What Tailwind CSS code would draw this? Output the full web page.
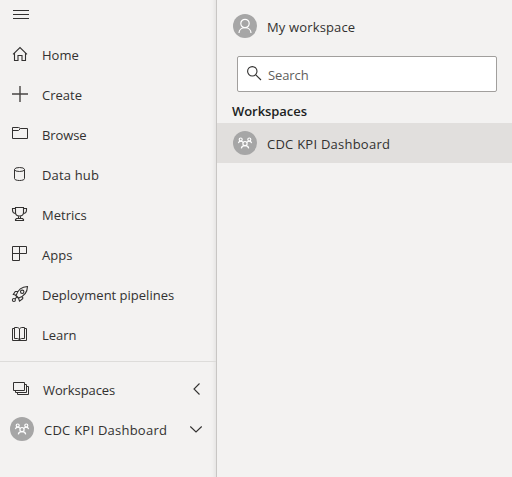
<!DOCTYPE html>
<html lang="en">
<head>
<meta charset="utf-8">
<title>Workspaces</title>
<script src="https://cdn.jsdelivr.net/npm/@tailwindcss/browser@4"></script>
</head>
<body class="bg-[#f3f2f1] text-[#323130] font-['Open_Sans','Noto_Sans',sans-serif] text-[13px] leading-5 overflow-hidden">
<svg class="hidden">
  <symbol id="people" viewBox="0 0 24 24">
    <circle cx="12" cy="12" r="12" fill="#a6a6a6"/>
    <g fill="none" stroke="#fff" stroke-width="1.2">
      <circle cx="7.700" cy="8.500" r="1.500"/><circle cx="16.300" cy="8.500" r="1.500"/><circle cx="12" cy="12.600" r="2.100"/>
      <path d="M5.400 12.200c.2-1.400 1-2.100 2.300-2.100 1.200 0 2 .6 2.600 1.400M18.600 12.200c-.2-1.400-1-2.100-2.300-2.100-1.200 0-2 .6-2.600 1.400M8.300 17.400c.3-1.900 1.700-2.800 3.700-2.800s3.400.9 3.700 2.800"/>
    </g>
  </symbol>
</svg>
<div class="flex h-[477px] w-[512px]">
  <nav class="w-[217px] shrink-0 border-r border-[#c8c6c4] flex flex-col shadow-[inset_-5px_0_4px_-4px_rgba(0,0,0,0.08)]">
    <div class="h-[35px] pl-[10px] pt-1">
      <svg class="size-5" viewBox="0 0 20 20" fill="none" stroke="#323130"><path d="M3 6.500h16M3 10.500h16M3 14.500h16"/></svg>
    </div>
    <ul class="h-80">
      <li class="h-10 flex items-center pl-[10px] gap-3"><svg class="size-5 -mt-0.5" viewBox="0 0 20 20" fill="none" stroke="#323130" stroke-width="1.1"><path d="M3 10.300L10 3.600l7 6.700M4.500 9v7.500h3.500v-5h4v5h3.500V9"/></svg><span>Home</span></li>
      <li class="h-10 flex items-center pl-[10px] gap-3"><svg class="size-5 -mt-0.5" viewBox="0 0 20 20" fill="none" stroke="#484644" stroke-width="1.400"><path d="M2 10h16M10 2v16"/></svg><span>Create</span></li>
      <li class="h-10 flex items-center pl-[10px] gap-3"><svg class="size-5 -mt-0.5" viewBox="0 0 20 20" fill="none" stroke="#323130"><path d="M2.500 14.500v-11h6l2 1h7v10h-15zM2.500 6.500h6l2-2"/></svg><span class="tracking-[-0.1px]">Browse</span></li>
      <li class="h-10 flex items-center pl-[10px] gap-3"><svg class="size-5 -mt-0.5" viewBox="0 0 20 20" fill="none" stroke="#323130"><ellipse cx="9.500" cy="5.500" rx="5" ry="2"/><path d="M4.500 5.500v9c0 1.200 2 2 5 2s5-.8 5-2v-9"/></svg><span class="tracking-[0.15px]">Data hub</span></li>
      <li class="h-10 flex items-center pl-[10px] gap-3"><svg class="size-5 -mt-0.5" viewBox="0 0 20 20" fill="none" stroke="#323130" stroke-width="1.100"><path d="M5.500 3.500h8v5c0 2-1.500 3.500-4 3.500s-4-1.500-4-3.500zM5.500 4.500h-3v1.500c0 2 1.300 3.500 3.400 3.500M13.500 4.500h3v1.500c0 2-1.300 3.500-3.400 3.500M8.500 12v2.500M10.500 12v2.500M5.500 16.500v-1l1-1h6l1 1v1z"/></svg><span>Metrics</span></li>
      <li class="h-10 flex items-center pl-[10px] gap-3"><svg class="size-5 -mt-0.5" viewBox="0 0 20 20" fill="none" stroke="#323130"><path d="M2.500 2.500h14v7h-7v7h-7zM2.500 9.500h7v-7"/></svg><span>Apps</span></li>
      <li class="h-10 flex items-center pl-[10px] gap-3"><svg class="size-5 -mt-0.5" viewBox="0 0 20 20" fill="none" stroke="#323130" stroke-width="1.100"><path d="M6 11.500C7.500 7 11 2.800 17.500 2.500 17.300 8.500 13.500 12.500 8.500 14zM8.300 7.300L5.300 7.500 3.300 10.500l3 .8M12.700 11.700v3l-3.200 2.500-1-3.200M5 10.800l4.200 4.200"/><circle cx="12.200" cy="7.800" r="1.700"/><circle cx="3.900" cy="16" r="1.500"/><path d="M5 14.900l2.200-2.200"/></svg><span>Deployment pipelines</span></li>
      <li class="h-10 flex items-center pl-[10px] gap-3"><svg class="size-5 -mt-0.5" viewBox="0 0 20 20" fill="none" stroke="#323130"><path d="M4.500 4.500h-2v12h14v-12h-2M9.500 16V5c-.5-1-1.500-1.500-2.500-1.500H4.500v11H7c1 0 2 .5 2.500 1.500.5-1 1.500-1.500 2.500-1.500h2.500v-11H12c-1 0-2 .5-2.500 1.500"/></svg><span>Learn</span></li>
    </ul>
    <div class="h-[15px] pt-[6px]"><div class="h-px bg-[#dddcda]"></div></div>
    <div class="h-10 flex items-center pl-[11px] pr-[10px]">
      <svg class="size-5 -mt-0.5" viewBox="0 0 20 20" fill="none" stroke="#323130"><path d="M2.500 3.500h11v8h-11zM13.500 5.500h2v8h-11v-2M15.500 7.500h2v8h-11v-2"/></svg>
      <span class="ml-3 tracking-[-0.1px]">Workspaces</span>
      <svg class="size-5 ml-auto -mt-0.5" viewBox="0 0 20 20" fill="none" stroke="#323130" stroke-width="1.100"><path d="M13.500 4.500L8 10l5.500 5.500"/></svg>
    </div>
    <div class="h-10 flex items-center pl-[10px] pr-[10px]">
      <svg class="size-6 -mt-0.5"><use href="#people"/></svg>
      <span class="ml-[10px] tracking-[0.24px]">CDC KPI Dashboard</span>
      <svg class="size-5 ml-auto -mt-0.5" viewBox="0 0 20 20" fill="none" stroke="#323130" stroke-width="1.100"><path d="M4.300 7.500L10 13l5.700-5.500"/></svg>
    </div>
  </nav>
  <main class="flex-1">
    <div class="mt-[7px] h-10 flex items-center pl-4 gap-[10px]">
      <svg class="size-6 -mt-0.5" viewBox="0 0 24 24"><circle cx="12" cy="12" r="12" fill="#a6a6a6"/><g fill="none" stroke="#fff" stroke-width="1.200"><circle cx="12" cy="9.500" r="4.200"/><path d="M6 19c0-3.300 2.600-5.300 6-5.300s6 2 6 5.300"/></g></svg>
      <span class="tracking-[0.15px]">My workspace</span>
    </div>
    <div class="mt-[9px] ml-5 w-[260px] h-9 bg-white border border-[#a19f9d] rounded-[2px] flex items-center pl-2 text-[#605e5c]">
      <svg class="size-5" viewBox="0 0 20 20" fill="none" stroke="#323130" stroke-width="1.100"><circle cx="6.300" cy="7.300" r="4.700"/><path d="M9.800 10.800l5.200 5.200"/></svg>
      <span class="ml-0.5 mt-0.5 tracking-[-0.1px]">Search</span>
    </div>
    <h2 class="mt-[9px] ml-[15px] h-[22px] font-semibold text-[#201f1e] tracking-[-0.06px]">Workspaces</h2>
    <div class="h-10 bg-[#e1dfdd] flex items-center pl-4 gap-[10px]">
      <svg class="size-6"><use href="#people"/></svg>
      <span class="mt-0.5 tracking-[0.24px]">CDC KPI Dashboard</span>
    </div>
  </main>
</div>
</body>
</html>
